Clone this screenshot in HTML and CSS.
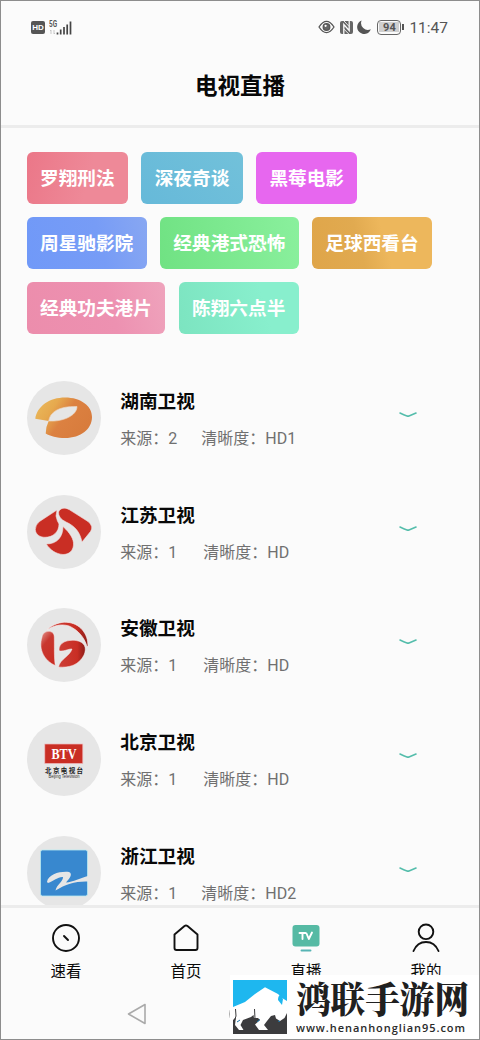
FILE: index.html
```html
<!DOCTYPE html>
<html lang="zh-CN">
<head>
<meta charset="utf-8">
<title>电视直播</title>
<link rel="stylesheet" href="styles.css">
</head>
<body>
<div class="phone">
  <div class="status">
    <div class="status-left">
      <span class="hd">HD</span>
      <svg width="23" height="16" viewBox="0 0 23 16">
        <text x="0" y="7" class="net" textLength="8" lengthAdjust="spacingAndGlyphs">5G</text>
        <path d="M2 14V10M1 11l1-1M5 10v4M6 13l-1 1" stroke="#bbb" stroke-width=".8" fill="none"/>
        <path d="M8.500 14.500v-2M11.700 14.500V9.500M15 14.500V7M18.200 14.500V4.500M21.500 14.500V1.500" stroke="#444" stroke-width="1.700" fill="none"/>
      </svg>
    </div>
    <div class="status-right">
      <svg width="17" height="14" viewBox="0 0 17 14" fill="none" stroke="#555" stroke-width="1.300"><path d="M1 7Q8.500-4.300 16 7Q8.500 18.300 1 7Z"/><circle cx="8.500" cy="7" r="3.300" fill="#666" stroke="#555"/><circle cx="7.600" cy="5.800" r="1.100" fill="#fff" stroke="none"/></svg>
      <svg class="nfc" width="13" height="13" viewBox="0 0 13 13"><rect width="13" height="13" rx="2" fill="#666"/><path d="M3.800 13V3.500L9.200 9.500V0" fill="none" stroke="#fbfbfb" stroke-width="1.300"/><path d="M4 0l5.200 5.500M3.800 8l5 5" stroke="#fbfbfb" stroke-width=".9"/></svg>
      <svg class="moon" width="14" height="14" viewBox="0 0 14 14"><path d="M4.600.5A7 7 0 1 0 13.800 9.200A6.800 6.800 0 0 1 4.600.5Z" fill="#555"/></svg>
      <span class="battery"><b>94</b></span><i class="cap"></i>
      <span class="time">11:47</span>
    </div>
  </div>
  <header class="header">电视直播</header>

  <main class="content">
    <div class="tags">
      <span class="tag red">罗翔刑法</span><span class="tag cyan">深夜奇谈</span><span class="tag magenta">黑莓电影</span>
      <span class="tag blue">周星驰影院</span><span class="tag green">经典港式恐怖</span><span class="tag gold">足球西看台</span>
      <span class="tag pink">经典功夫港片</span><span class="tag mint">陈翔六点半</span>
    </div>

    <div class="list">
      <div class="row">
        <svg class="avatar" viewBox="0 0 74 74"><defs><linearGradient id="hn" x1="0" x2="1" y1="0" y2=".5"><stop stop-color="#ebbc5e"/><stop offset=".35" stop-color="#e6a94e"/><stop offset=".6" stop-color="#dc8141"/><stop offset="1" stop-color="#d87c3d"/></linearGradient></defs><circle cx="37" cy="37" r="37" fill="#e6e6e6"/><path d="M8.300 37.700C10 25 23 16.500 38 16.500C54 16.500 65 25 65 36C65 48 54 57 38 57C30 57 23 55 18.700 52.500Q19 45 21.700 40Z" fill="url(#hn)"/><path d="M21.700 40C23 31 32 25 50 25.500C50 35 35 41 21.700 40Z" fill="#e6e6e6" stroke="#eed9c4" stroke-width=".6"/></svg>
        <div class="info"><h3>湖南卫视</h3><p><span>来源：2</span><span>清晰度：HD1</span></p></div>
        <svg class="chev" viewBox="0 0 18 6"><path d="M1 1Q5 3 8 4Q9 4.300 10 4L17 1"/></svg>
      </div>
      <div class="row">
        <svg class="avatar" viewBox="0 0 74 74"><circle cx="37" cy="37" r="37" fill="#e6e6e6"/><g fill="#c92e24" stroke="#f1e3e2" stroke-width=".6"><path d="M30 15L12.500 26.500Q8.300 30 8.300 34.500C8.500 39.500 13 42.300 18 42.300C26 42.300 32 37 32 29Q30 26 29 21Z"/><path d="M31.500 17C33 13 38 12 42.500 14.800L61 26.500Q67 31.500 63.500 36.500L55 47C53 37 48 31 39 27Q31 23 31.500 17Z"/><path d="M36 31.500C43 38 47 44 46.500 50C46 56 42 59.500 36 59.500C29 59 23 55 19.300 49C30 49 36 42 36 31.500Z"/></g></svg>
        <div class="info"><h3>江苏卫视</h3><p><span>来源：1</span><span class="short">清晰度：HD</span></p></div>
        <svg class="chev" viewBox="0 0 18 6"><path d="M1 1Q5 3 8 4Q9 4.300 10 4L17 1"/></svg>
      </div>
      <div class="row">
        <svg class="avatar" viewBox="0 0 74 74"><defs><linearGradient id="ah" x1="0" x2=".5" y1="0" y2="1"><stop stop-color="#e49890"/><stop offset=".4" stop-color="#c83830"/><stop offset="1" stop-color="#c92e24"/></linearGradient><linearGradient id="ahr"><stop stop-color="#cc3e36"/><stop offset=".7" stop-color="#c92e24"/><stop offset="1" stop-color="#8c1d18"/></linearGradient></defs><circle cx="37" cy="37" r="37" fill="#e6e6e6"/><path d="M20 21.500C33 10.500 48 13 55.500 22C59.500 27 61 32 61 38.500H60C57 29 51 22 42 18C33 15.500 27 18 20 21.500Z" fill="url(#ahr)" stroke="#f8eeee" stroke-width=".7"/><path d="M15 29C16 22 27 21 27.300 29C27.500 39 27 50 28.300 57.500C18 53 11 42 15 29Z" fill="url(#ah)" stroke="#f8eeee" stroke-width=".5"/><path d="M32 42.500C31.500 34 41 31.500 49 32.500C58 34 60 40 57 47C52 57 42 60 31.500 59C33 51 43 48 45 41C42 40.500 35 44.500 32 42.500Z" fill="url(#ahr)" stroke="#f8eeee" stroke-width=".5"/></svg>
        <div class="info"><h3>安徽卫视</h3><p><span>来源：1</span><span class="short">清晰度：HD</span></p></div>
        <svg class="chev" viewBox="0 0 18 6"><path d="M1 1Q5 3 8 4Q9 4.300 10 4L17 1"/></svg>
      </div>
      <div class="row">
        <svg class="avatar" viewBox="0 0 74 74"><circle cx="37" cy="37" r="37" fill="#e6e6e6"/><rect x="17.800" y="22" width="38" height="19.500" fill="#c92e24" stroke="#efb9bd" stroke-width=".7"/><text x="37" y="37.300" class="btv" textLength="25" lengthAdjust="spacingAndGlyphs">BTV</text><text x="37" y="50.500" class="btv-cn" textLength="38">北京电视台</text><text x="37" y="55.700" class="btv-en" textLength="31" lengthAdjust="spacingAndGlyphs">Beijing Television</text></svg>
        <div class="info"><h3>北京卫视</h3><p><span>来源：1</span><span class="short">清晰度：HD</span></p></div>
        <svg class="chev" viewBox="0 0 18 6"><path d="M1 1Q5 3 8 4Q9 4.300 10 4L17 1"/></svg>
      </div>
      <div class="row">
        <svg class="avatar" viewBox="0 0 74 74"><circle cx="37" cy="37" r="37" fill="#e6e6e6"/><rect x="13.500" y="14" width="47" height="46" rx="2" fill="#3888cf" stroke="#b9eaf0" stroke-width=".8"/><path d="M20 46C21 38 34 35 42 36C46 38 43 42 39 46.500C46 46 54 42 61 40V45.500C49 45 39 48 28.500 54.500C30 48 36 46 36 41C31 40.500 27 45 21 47Z" fill="#e6e6e6"/></svg>
        <div class="info"><h3>浙江卫视</h3><p><span>来源：1</span><span>清晰度：HD2</span></p></div>
        <svg class="chev" viewBox="0 0 18 6"><path d="M1 1Q5 3 8 4Q9 4.300 10 4L17 1"/></svg>
      </div>
    </div>
  </main>

  <nav class="nav">
    <div class="nav-item"><svg viewBox="0 0 30 30"><circle cx="15" cy="15" r="13"/><path d="M13 13l4 4"/></svg>速看</div>
    <div class="nav-item"><svg viewBox="0 0 30 30"><path d="M3.500 11.500L13.500 3Q15 2 16.500 3L26.500 11.500V25Q26.500 27 24.500 27H5.500Q3.500 27 3.500 25Z"/></svg>首页</div>
    <div class="nav-item"><svg viewBox="0 0 30 30"><rect x="1.500" y="2" width="27" height="21.500" rx="3" fill="#56baa4" stroke="none"/><path d="M8.500 10h6M11.500 10v6M15.500 10.500l2.300 5.500L21 9.500" stroke="#fff"/><path d="M10.500 27.500h9" stroke="#56b4b4"/></svg>直播</div>
    <div class="nav-item"><svg viewBox="0 0 30 30"><circle cx="15" cy="8.800" r="7.300"/><path d="M2.500 28C5 22 10 19 15 19S25 22 27.500 28"/></svg>我的</div>
  </nav>
  <div class="system">
    <svg class="back" viewBox="0 0 20 22"><path d="M18 1.500V20.500L1.500 11Z"/></svg>
    <i class="home"></i>
  </div>
  <div class="brand">
    <svg class="bison" viewBox="0 0 54 54"><rect width="54" height="54" fill="#3c3c3e"/><path d="M0 0H54V24L40 18L0 29Z" fill="#1eb7ef"/><path d="M0 27L12 22L22 14L32 7.300L45 14L49 18L54 21V33L51.500 38L47 41L43 38.500L42 35L38 36L34 41L31 45L35 50H26L22 44.500L27 40L25 38H21L20.500 35L18 37L10 40L7.500 45L10.500 50H6L2 45L3 37L0 40Z" fill="#fff"/><path d="M21.500 29L22 39M2.500 29L3 36L1 42" fill="none" stroke="#3c3c3e"/><path d="M47.500 11C50 14 47.500 16 50 19L49 25L45 20Q45 16 47 15Z" fill="#1eb7ef"/><path d="M4 42L7 40M24 42L27 39.500M45 41l2 .5" stroke="#1974a8"/></svg>
    <div class="brand-text"><svg class="brand-name" viewBox="0 0 174 42"><text x="0" y="32.500" textLength="173" lengthAdjust="spacingAndGlyphs">鸿联手游网</text></svg><svg class="brand-url" viewBox="0 0 174 17"><text x="0" y="10" textLength="169">www.henanhonglian95.com</text></svg></div>
  </div>
</div>
</body>
</html>
```

FILE: styles.css
```css
* { box-sizing: border-box; }
body { margin: 0; font-family: Roboto, "Noto Sans CJK SC", sans-serif; }
svg { display: block; flex: none; }
.phone { position: relative; display: flex; flex-direction: column; width: 480px; height: 1040px; overflow: hidden; border: 1px solid #8d8d8d; background: #fbfbfb; color: #080808; }
.status { height: 53px; flex: none; display: flex; justify-content: space-between; align-items: center; padding: 0 31px 0 30px; }
.status-left, .status-right { display: flex; align-items: center; }
.status-right { margin-top: -1px; }
.hd { width: 14px; height: 13px; margin-right: 4px; border-radius: 2px; background: #555; color: #fff; font: bold 8px/13px "Liberation Sans", sans-serif; text-align: center; }
.net { font: bold 8.5px Roboto, sans-serif; fill: #555; }
.nfc { margin-left: 5px; }
.moon { margin-left: 4px; }
.battery { width: 24px; height: 15px; margin-left: 6px; padding: 1px; border: 1.5px solid #666; border-radius: 4px; }
.battery b { display: block; height: 10px; background: #d0d0d0; color: #555; font-size: 11px; line-height: 11px; text-align: center; }
.cap { width: 2px; height: 6px; margin-left: 1px; background: #555; }
.time { margin-left: 5px; padding-top: 1px; color: #555; font-size: 15.500px; line-height: 18px; }
.header { height: 74px; flex: none; padding-top: 16px; border-bottom: 3px solid #ececec; text-align: center; font-size: 22.500px; font-weight: 700; line-height: 33px; }
.content { height: 777px; flex: none; padding-left: 25.600px; overflow: hidden; }
.tags { display: flex; flex-wrap: wrap; gap: 13.300px; width: 430px; padding-top: 23.600px; }
.tag { height: 52px; padding: 1px 13.400px 0; border-radius: 6px; color: #fff; font-size: 18.670px; font-weight: 700; line-height: 52px; }
.red { background: linear-gradient(105deg, #eb7788, #ee8998 60%); }
.cyan { background: linear-gradient(45deg, #66b9d9, #72c1da); }
.magenta { background: #e767ef; }
.blue { background: linear-gradient(75deg, #7099f8, #779cf6 60%, #88a7f2); }
.green { background: linear-gradient(80deg, #70e283, #8af09d); }
.gold { background: linear-gradient(75deg, #dfa549, #e1aa50 40%, #edb75c 60%); }
.pink { background: linear-gradient(75deg, #ec8dac, #ed91b1 60%, #efa3bc); }
.mint { background: linear-gradient(75deg, #7ce4c0, #88efcd 70%); }
.list { padding-top: 46.600px; }
.row { height: 113.850px; display: flex; align-items: flex-start; }
.avatar { width: 74px; height: 74px; margin-right: 19.700px; }
.info { width: 279px; }
h3 { margin: 7px 0 0; font-size: 18.670px; line-height: 28px; }
p { margin: 11px 0 0; display: flex; font-size: 16px; line-height: 24px; color: #707070; }
p span:first-child { width: 81px; }
p .short { padding-left: 2px; }
.chev { width: 18px; height: 6px; margin-top: 31px; fill: none; stroke: #54bdab; stroke-width: 1.600; stroke-linecap: round; }
.btv { font: bold 15px "Liberation Serif", serif; fill: #fff; text-anchor: middle; }
.btv-cn { font: bold 6.500px "Noto Sans CJK SC", sans-serif; fill: #222; text-anchor: middle; }
.btv-en { font: 5px "Liberation Sans", sans-serif; fill: #333; text-anchor: middle; }
.nav { height: 84px; flex: none; display: flex; padding-left: 5px; border-top: 3px solid #ececec; }
.nav-item { width: 120px; flex: none; display: flex; flex-direction: column; align-items: center; padding-top: 14.500px; gap: 8.500px; font-size: 15.500px; line-height: 23px; }
.nav-item svg { width: 30px; height: 30px; fill: none; stroke: #111; stroke-width: 1.900; stroke-linecap: round; stroke-linejoin: round; }
.system { flex: 1; display: flex; align-items: center; padding-left: 126px; gap: 82px; }
.back { width: 20px; height: 22px; fill: none; stroke: #aaa; stroke-width: 1.600; stroke-linejoin: round; }
.home { width: 20px; height: 20px; border: 1.500px solid #aaa; border-radius: 50%; }
.brand { position: absolute; left: 229px; top: 974px; width: 250px; height: 65px; display: flex; padding: 5px 0 0 3px; background: #fff; }
.bison { width: 54px; height: 54px; }
.brand-text { margin-left: 9px; }
.brand-name { width: 174px; height: 42px; font: 900 36px "Noto Serif CJK SC", "Noto Sans CJK SC", serif; fill: #202020; }
.brand-url { width: 174px; height: 17px; font: 600 11px "Open Sans", sans-serif; fill: #292929; }
```
